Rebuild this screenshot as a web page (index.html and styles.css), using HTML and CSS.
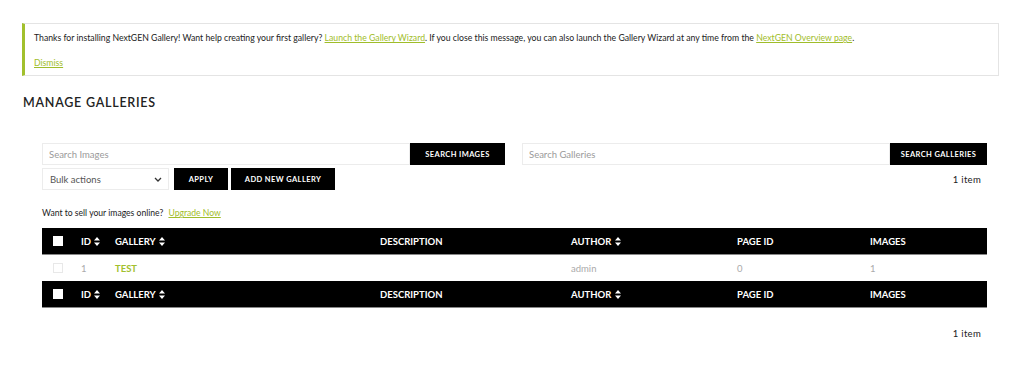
FILE: index.html
```html
<!DOCTYPE html>
<html lang="en">
<head>
    <meta charset="UTF-8">
    <meta name="viewport" content="width=device-width, initial-scale=1.0">
    <title>Manage Galleries</title>
    <link rel="stylesheet" href="styles.css">
</head>
<body>
    <div class="notice">
        <p>Thanks for installing NextGEN Gallery! Want help creating your first gallery? <a href="#">Launch the Gallery Wizard</a>. If you close this message, you can also launch the Gallery Wizard at any time from the <a href="#">NextGEN Overview page</a>.</p>
        <p><a href="#">Dismiss</a></p>
    </div>

    <h1 class="page-title">Manage Galleries</h1>

    <div class="content">
        <div class="search-row">
            <div class="search-box">
                <input type="text" placeholder="Search Images">
                <button class="btn">Search Images</button>
            </div>
            <div class="search-box">
                <input type="text" placeholder="Search Galleries">
                <button class="btn">Search Galleries</button>
            </div>
        </div>

        <div class="actions-row">
            <div class="select-box">
                <span>Bulk actions</span>
                <svg width="8" height="5" viewBox="0 0 8 5"><path d="M1 1l3 3 3-3" fill="none" stroke="#333" stroke-width="1.3"/></svg>
            </div>
            <button class="btn btn-apply">Apply</button>
            <button class="btn btn-add">Add New Gallery</button>
            <span class="count">1 item</span>
        </div>

        <p class="upsell">Want to sell your images online? <a href="#">Upgrade Now</a></p>

        <table class="galleries">
            <colgroup>
                <col style="width: 31px">
                <col style="width: 34px">
                <col style="width: 265px">
                <col style="width: 191px">
                <col style="width: 166px">
                <col style="width: 133px">
                <col style="width: 125px">
            </colgroup>
            <thead>
                <tr>
                    <th class="cb"><span class="check"></span></th>
                    <th>ID <svg class="sort" width="6" height="9" viewBox="0 0 6 9"><path d="M3 0L6 3.5H0zM3 9L0 5.5h6z" fill="#fff"/></svg></th>
                    <th>Gallery <svg class="sort" width="6" height="9" viewBox="0 0 6 9"><path d="M3 0L6 3.5H0zM3 9L0 5.5h6z" fill="#fff"/></svg></th>
                    <th>Description</th>
                    <th>Author <svg class="sort" width="6" height="9" viewBox="0 0 6 9"><path d="M3 0L6 3.5H0zM3 9L0 5.5h6z" fill="#fff"/></svg></th>
                    <th>Page ID</th>
                    <th>Images</th>
                </tr>
            </thead>
            <tbody>
                <tr>
                    <td class="cb"><span class="check"></span></td>
                    <td>1</td>
                    <td><a class="gallery-link" href="#">Test</a></td>
                    <td></td>
                    <td>admin</td>
                    <td>0</td>
                    <td>1</td>
                </tr>
            </tbody>
            <tfoot>
                <tr>
                    <th class="cb"><span class="check"></span></th>
                    <th>ID <svg class="sort" width="6" height="9" viewBox="0 0 6 9"><path d="M3 0L6 3.5H0zM3 9L0 5.5h6z" fill="#fff"/></svg></th>
                    <th>Gallery <svg class="sort" width="6" height="9" viewBox="0 0 6 9"><path d="M3 0L6 3.5H0zM3 9L0 5.5h6z" fill="#fff"/></svg></th>
                    <th>Description</th>
                    <th>Author <svg class="sort" width="6" height="9" viewBox="0 0 6 9"><path d="M3 0L6 3.5H0zM3 9L0 5.5h6z" fill="#fff"/></svg></th>
                    <th>Page ID</th>
                    <th>Images</th>
                </tr>
            </tfoot>
        </table>

        <div class="bottom-count">1 item</div>
    </div>
</body>
</html>
```

FILE: styles.css
```css
body {
    font-family: Lato, "Open Sans", sans-serif;
    color: #222;
    margin: 0;
    padding: 23px 25px 0 22px;
    background-color: #fff;
}

a {
    color: #9fbd2a;
}

.notice {
    border: 1px solid #e4e4e4;
    border-left: 3px solid #a2c02d;
    padding: 6px 10px 0 9px;
    height: 45px;
    font-size: 8.7px;
}

.notice p {
    margin: 0 0 9px;
    line-height: 16px;
}

.page-title {
    font-size: 12.5px;
    font-weight: 600;
    text-transform: uppercase;
    letter-spacing: 0.75px;
    margin: 19px 0 0 1px;
    line-height: 16px;
    color: #222;
}

.content {
    margin-left: 20px;
    width: 945px;
    padding-top: 32px;
}

.search-row {
    display: grid;
    grid-template-columns: 463px 465px;
    gap: 17px;
}

.search-box {
    display: flex;
    height: 22px;
}

.search-box input {
    flex: 1;
    border: 1px solid #ececec;
    padding: 0 6px;
    font-family: inherit;
    font-size: 9.5px;
    outline: none;
}

.search-box input::placeholder {
    color: #9a9a9a;
}

.btn {
    background: #000;
    color: #fff;
    border: none;
    font-family: inherit;
    font-weight: 700;
    font-size: 7.5px;
    letter-spacing: 0.4px;
    text-transform: uppercase;
    cursor: pointer;
    padding: 0;
}

.search-box .btn {
    width: 95px;
}

.search-box:last-child .btn {
    width: 97px;
}

.actions-row {
    display: flex;
    align-items: center;
    margin-top: 3px;
    height: 22px;
}

.select-box {
    width: 127px;
    height: 22px;
    box-sizing: border-box;
    border: 1px solid #ececec;
    display: flex;
    align-items: center;
    justify-content: space-between;
    padding: 0 6px 0 7px;
    font-size: 9.5px;
    color: #555;
}

.btn-apply {
    width: 54px;
    height: 22px;
    margin-left: 5px;
}

.btn-add {
    width: 104px;
    height: 22px;
    margin-left: 3px;
}

.count {
    margin-left: auto;
    margin-right: 6px;
    font-size: 9.5px;
    letter-spacing: 0.3px;
}

.upsell {
    font-size: 8.6px;
    margin: 17px 0 0;
    line-height: 12px;
}

.upsell a {
    margin-left: 3px;
}

.galleries {
    width: 945px;
    table-layout: fixed;
    border-collapse: collapse;
    margin-top: 9px;
    font-size: 9.5px;
}

.galleries th {
    background: #000;
    color: #fff;
    text-align: left;
    font-weight: 700;
    text-transform: uppercase;
    height: 26px;
    padding: 0 0 0 8px;
    border-bottom: 1px solid #888;
}

.galleries td {
    height: 26px;
    padding: 0 0 0 8px;
    color: #aaa;
}

.galleries .cb {
    padding-left: 11px;
}

.check {
    display: block;
    width: 10px;
    height: 10px;
    background: #fff;
}

.galleries td .check {
    box-sizing: border-box;
    border: 1px solid #e8e8e8;
}

.sort {
    vertical-align: -1px;
    margin-left: 1px;
}

.gallery-link {
    color: #a2c02d;
    text-decoration: none;
    font-weight: 700;
    text-transform: uppercase;
}

.bottom-count {
    text-align: right;
    padding-right: 6px;
    margin-top: 20px;
    font-size: 9.5px;
    letter-spacing: 0.3px;
}
```
